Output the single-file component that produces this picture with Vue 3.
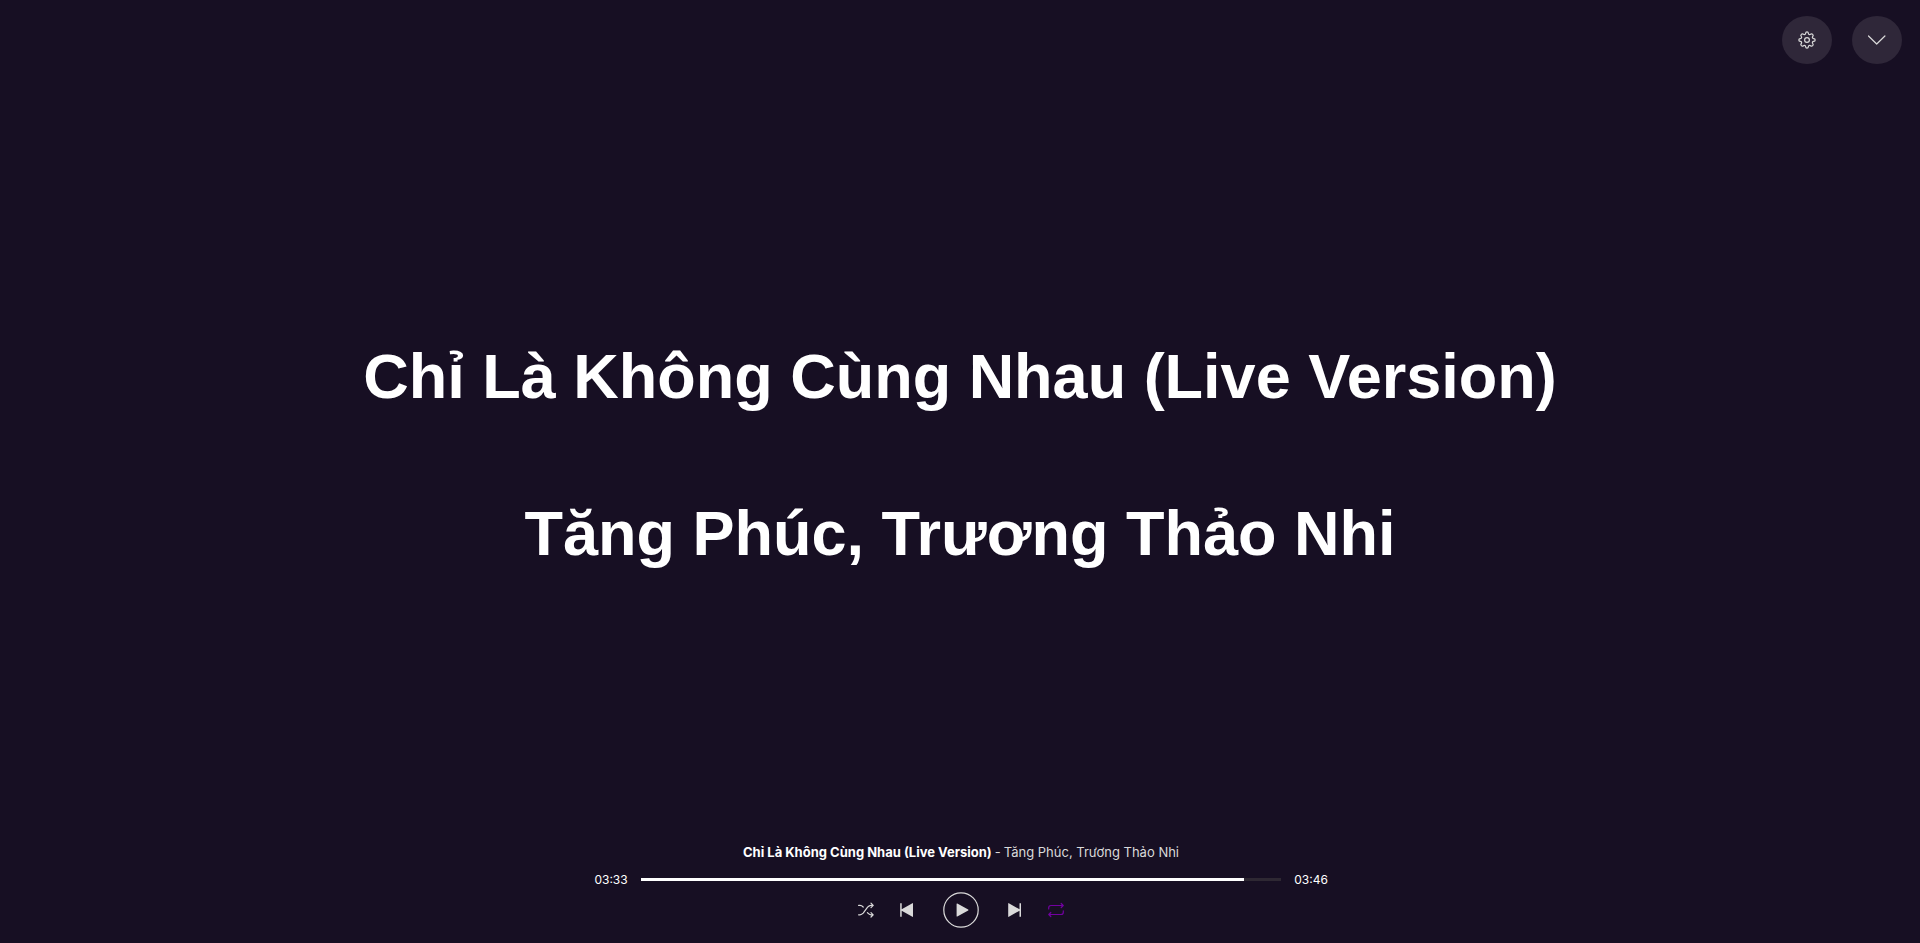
<script setup>
import { ref, computed } from 'vue'

const title = 'Chỉ Là Không Cùng Nhau (Live Version)'
const artists = 'Tăng Phúc, Trương Thảo Nhi'
const total = 226
const current = ref(213)
const progress = computed(() => (current.value / total) * 100 + '%')

const format = (s) =>
  String(Math.floor(s / 60)).padStart(2, '0') + ':' + String(s % 60).padStart(2, '0')
</script>

<template>
  <div class="player">
    <header class="top-bar">
      <button class="round" type="button" aria-label="Settings">
        <svg width="18" height="18" viewBox="0 0 18 18" fill="none" stroke="currentColor" stroke-width="1.2" stroke-linejoin="round">
          <circle cx="9" cy="9" r="2.4" />
          <path d="M7.6 2.4C7.8 .3 10.2 .3 10.4 2.4C10.5 3.6 11.6 4 12.5 3.3C14.1 2 16 3.9 14.7 5.5C14 6.4 14.4 7.5 15.6 7.6C17.7 7.8 17.7 10.2 15.6 10.4C14.4 10.5 14 11.6 14.7 12.5C16 14.1 14.1 16 12.5 14.7C11.6 14 10.5 14.4 10.4 15.6C10.2 17.7 7.8 17.7 7.6 15.6C7.5 14.4 6.4 14 5.5 14.7C3.9 16 2 14.1 3.3 12.5C4 11.6 3.6 10.5 2.4 10.4C.3 10.2 .3 7.8 2.4 7.6C3.6 7.5 4 6.4 3.3 5.5C2 3.9 3.9 2 5.5 3.3C6.4 4 7.5 3.6 7.6 2.4Z" />
        </svg>
      </button>
      <button class="round" type="button" aria-label="Close">
        <svg width="18" height="18" viewBox="0 0 18 18" fill="none" stroke="currentColor" stroke-width="1.2" stroke-linecap="round" stroke-linejoin="round">
          <path d="M.5 5L8.7 13L16.9 5" />
        </svg>
      </button>
    </header>

    <main class="lyrics">
      <p>{{ title }}</p>
      <p>{{ artists }}</p>
    </main>

    <footer class="controls">
      <div class="now"><strong>{{ title }}</strong><span>-</span><span>{{ artists }}</span></div>
      <div class="timeline">
        <time>{{ format(current) }}</time>
        <input v-model.number="current" class="seek" type="range" min="0" :max="total" aria-label="Position" :style="{ '--progress': progress }">
        <time>{{ format(total) }}</time>
      </div>
      <div class="buttons">
        <button type="button" aria-label="Shuffle">
          <svg width="16" height="16" viewBox="0 0 16 16" fill="none" stroke="currentColor" stroke-width="1.2" stroke-linecap="round" stroke-linejoin="round">
            <path d="M.6 3.4H2Q3.7 3.4 5.2 5M.6 12.8H2Q3.7 12.8 5.2 11.2L9.6 5.2Q11.2 3.4 13 3.4H15M9.4 10.6L9.9 11.2Q11.2 12.8 13 12.8H15M13 1.2L15.2 3.4L13 5.6M13 10.6L15.2 12.8L13 15" />
          </svg>
        </button>
        <button type="button" aria-label="Previous">
          <svg width="16" height="16" viewBox="0 0 16 16" fill="currentColor">
            <path d="M1.2 1.2H2.7V7.3L13.4 1.2Q14 .9 14 1.6V14.4Q14 15.1 13.4 14.8L2.7 8.7V14.8H1.2Z" />
          </svg>
        </button>
        <button class="play" type="button" aria-label="Play">
          <svg width="36" height="36" viewBox="0 0 36 36">
            <circle cx="18" cy="18" r="17.2" fill="none" stroke="currentColor" stroke-width="1.2" />
            <path d="M13.6 12Q13.6 11.1 14.3 11.5L25.2 17.6Q25.8 18 25.2 18.4L14.3 24.5Q13.6 24.9 13.6 24Z" fill="currentColor" />
          </svg>
        </button>
        <button type="button" aria-label="Next">
          <svg width="16" height="16" viewBox="0 0 16 16" fill="currentColor">
            <path d="M14 1.2H12.5V7.3L1.8 1.2Q1.2 .9 1.2 1.6V14.4Q1.2 15.1 1.8 14.8L12.5 8.7V14.8H14Z" />
          </svg>
        </button>
        <button class="active" type="button" aria-label="Repeat" aria-pressed="true">
          <svg width="16" height="16" viewBox="0 0 16 16" fill="none" stroke="currentColor" stroke-width="1.2" stroke-linecap="round" stroke-linejoin="round">
            <path d="M.7 7V5.8Q.7 3.5 3 3.5H15.2M13.2 1.5L15.2 3.5L13.2 5.5M15.3 8.8V10.2Q15.3 12.5 13 12.5H.8M2.8 10.5L.8 12.5L2.8 14.5" />
          </svg>
        </button>
      </div>
    </footer>
  </div>
</template>

<style>
body {
  background: #170f23;
}
</style>

<style scoped>
.player {
  display: flex;
  flex-direction: column;
  min-height: 100vh;
  background: #170f23;
  color: #fff;
  font-family: Inter, sans-serif;
}

button {
  display: flex;
  align-items: center;
  justify-content: center;
  padding: 0;
  border: 0;
  background: none;
  color: #dadada;
  cursor: pointer;
}

.top-bar {
  display: flex;
  justify-content: flex-end;
  gap: 20px;
  padding: 16px 18px;
}

.round {
  width: 50px;
  height: 48px;
  border-radius: 50%;
  background: #2f2739;
}

.lyrics {
  display: flex;
  flex: 1;
  flex-direction: column;
  justify-content: center;
  gap: 80px;
  text-align: center;
  font-family: "Liberation Sans", Arial, sans-serif;
  font-size: 63px;
  font-weight: 700;
  line-height: 77px;
}

.lyrics p {
  margin: 0;
}

.controls {
  display: flex;
  flex-direction: column;
  align-items: center;
  padding: 14px 0 15px 2px;
}

.now {
  display: flex;
  gap: 3px;
  margin-bottom: 11px;
  color: #dadada;
  font-size: 13px;
  line-height: 18px;
}

.now strong {
  color: #fff;
  font-weight: 700;
}

.timeline {
  display: flex;
  align-items: center;
  justify-content: center;
  gap: 13px;
  width: 100%;
  margin-bottom: 5px;
  font-size: 12px;
  line-height: 15px;
}

.timeline time {
  width: 34px;
}

.timeline time:first-child {
  text-align: right;
}

.seek {
  width: 33.4%;
  height: 3px;
  margin: 0;
  appearance: none;
  background: linear-gradient(#fff, #fff) 0 0 / var(--progress) 100% no-repeat #2e2833;
}

.seek::-webkit-slider-thumb {
  width: 1px;
  height: 3px;
  appearance: none;
  background: transparent;
}

.buttons {
  display: flex;
  align-items: center;
  gap: 25px;
}

.play {
  margin: 0 3px;
}

.active {
  color: #7200a1;
}
</style>
